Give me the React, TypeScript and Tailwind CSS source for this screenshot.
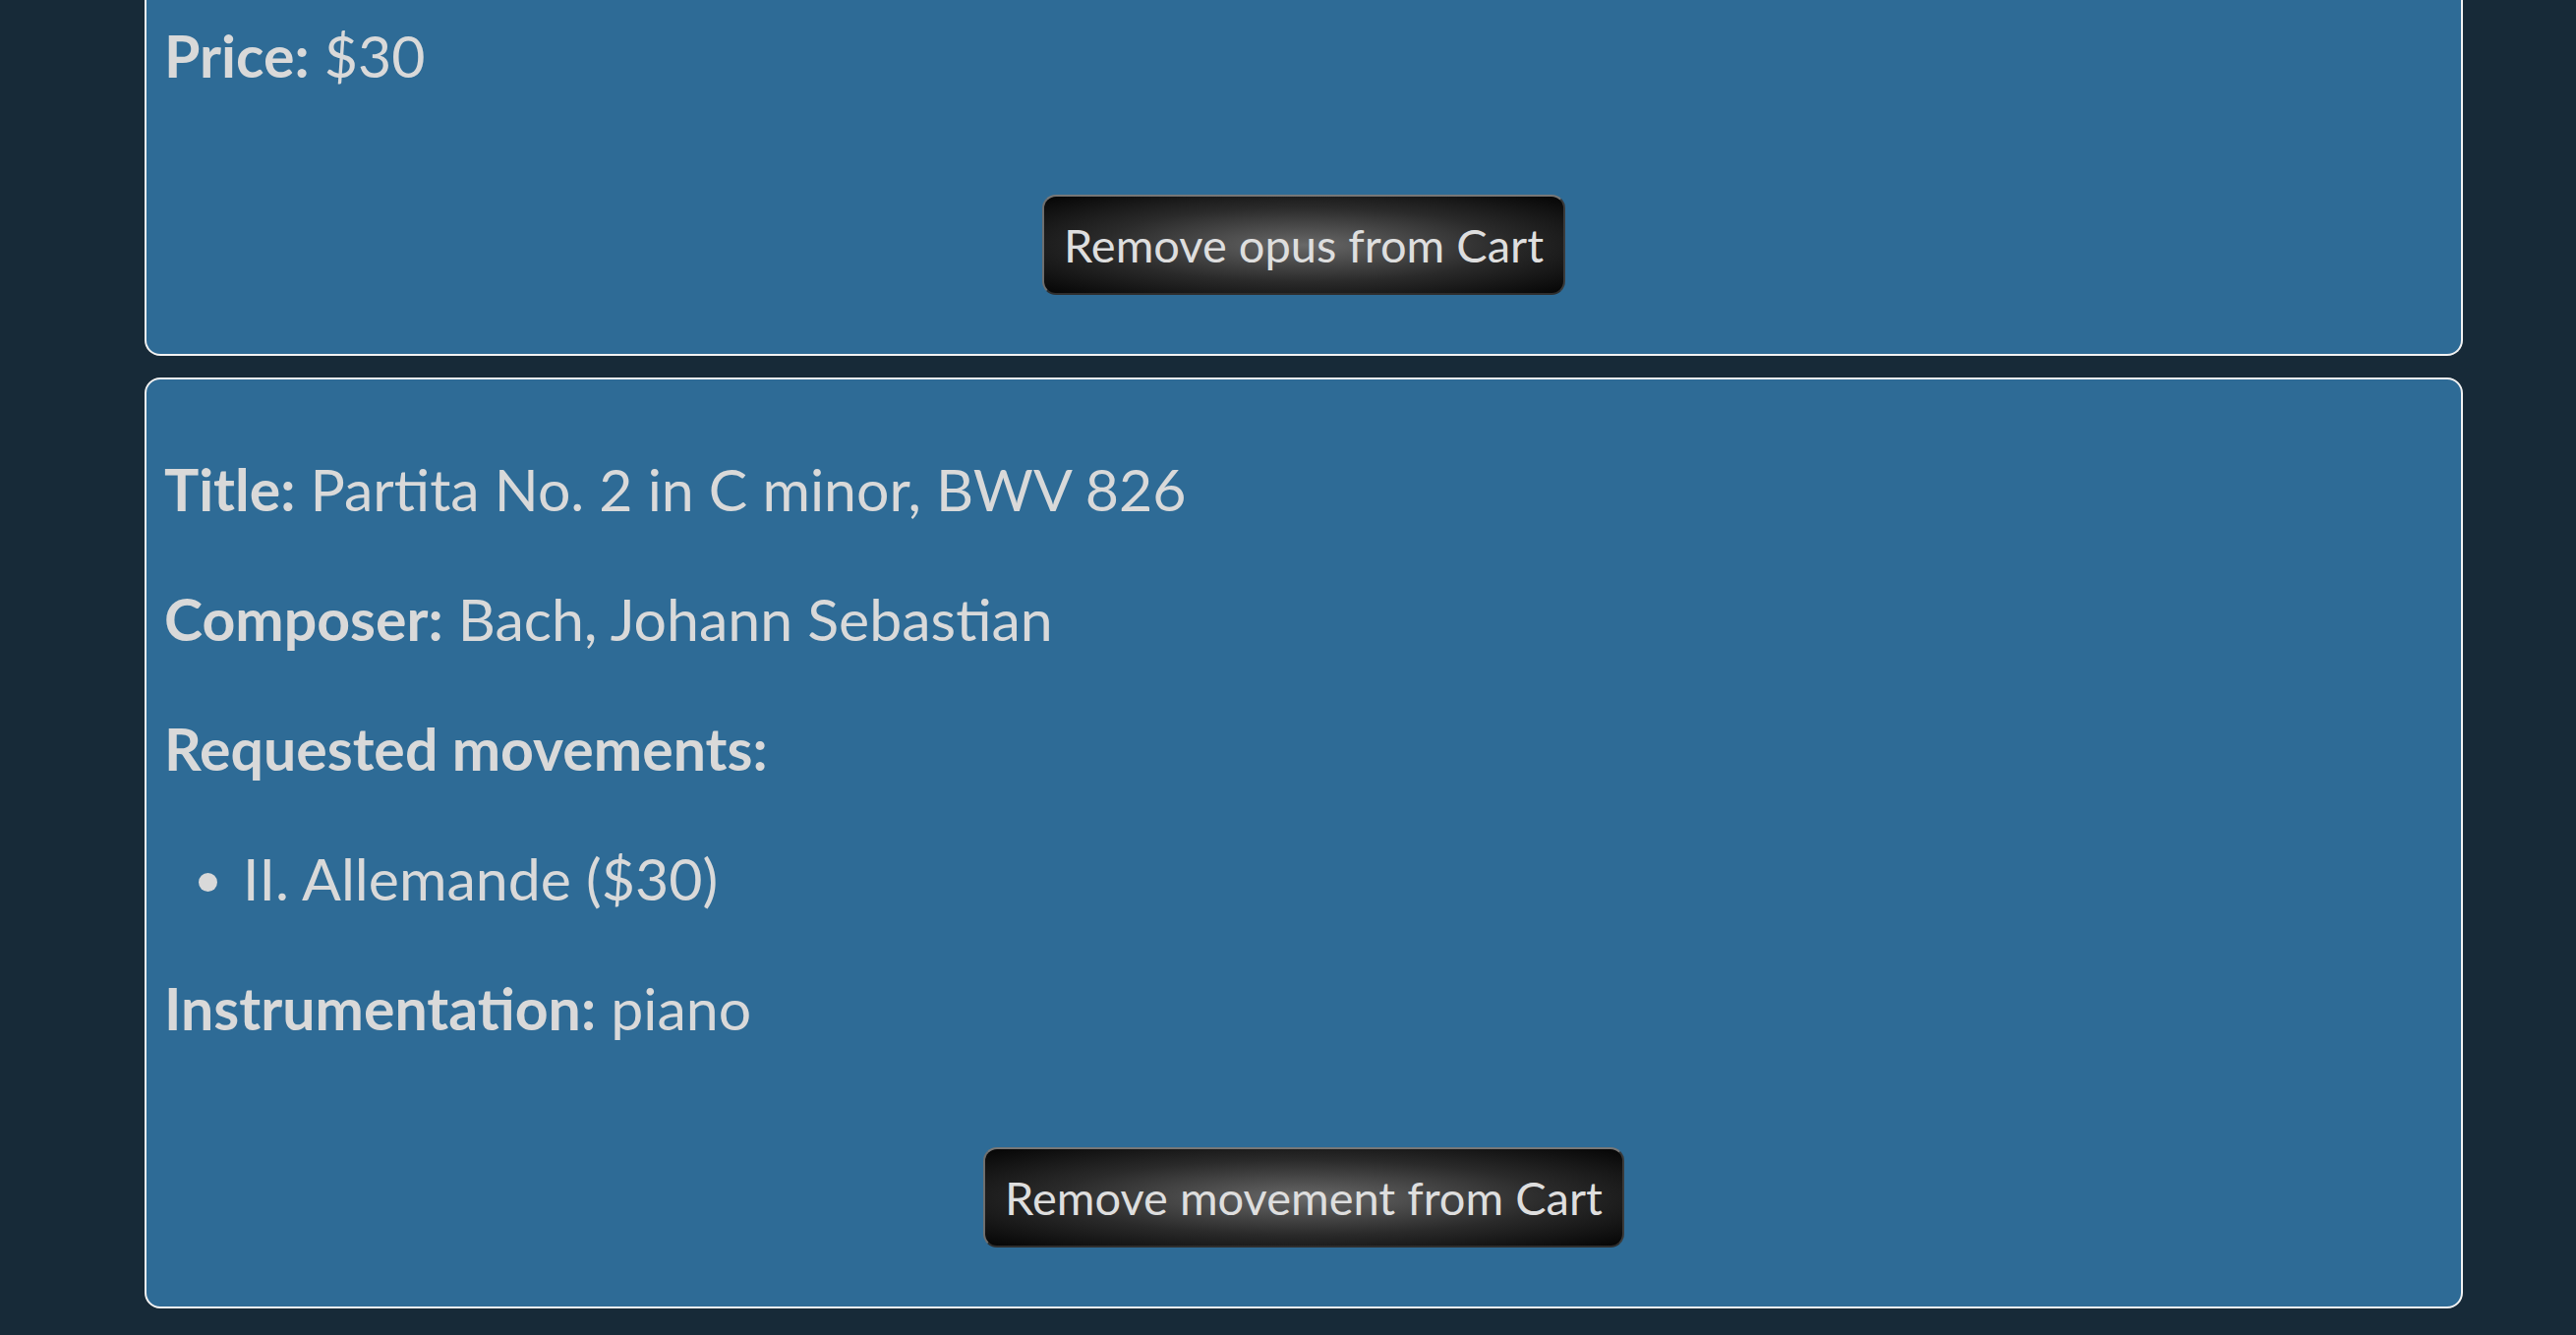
const font = "font-['Lato','Liberation_Sans',sans-serif]";

function CartButton({ label }: { label: string }) {
  return (
    <div className="flex justify-center mt-[104px]">
      <button
        type="button"
        className="h-[102px] px-[20px] rounded-[14px] border-2 border-t-[#777777] border-l-[#6e6e6e] border-r-[#3a3a3a] border-b-[#2e2e2e] bg-[radial-gradient(ellipse_at_center,#686868_0%,#2a2a2a_55%,#050505_100%)] text-[47px] leading-none text-[#dedede]"
      >
        {label}
      </button>
    </div>
  );
}

function Field({ label, value }: { label: string; value?: string }) {
  return (
    <p className="leading-[74px]">
      <b className="font-bold">{label}</b>
      {value ? ` ${value}` : null}
    </p>
  );
}

export default function App() {
  return (
    <div className={`min-h-screen h-[1358px] overflow-hidden bg-[#172a38] text-[#d9d9d9] text-[59px] ${font}`}>
      <div className="ml-[147px] w-[2358px] flex flex-col gap-[22px]">
        {/* first opus, scrolled partly out of view */}
        <div className="bg-[#2e6b96] border-2 border-t-0 border-[#f2f2f2] rounded-b-[16px] pt-[20px] pb-[60px] px-[18px]">
          <Field label="Price:" value="$30" />
          <CartButton label="Remove opus from Cart" />
        </div>

        <div className="bg-[#2e6b96] border-2 border-[#f2f2f2] rounded-[16px] pt-[75px] pb-[60px] px-[18px]">
          <div className="flex flex-col gap-[58px]">
            <Field label="Title:" value="Partita No. 2 in C minor, BWV 826" />
            <Field label="Composer:" value="Bach, Johann Sebastian" />
            <Field label="Requested movements:" />
            <ul className="list-disc pl-[80px] leading-[74px]">
              <li>II. Allemande ($30)</li>
            </ul>
            <Field label="Instrumentation:" value="piano" />
          </div>
          <CartButton label="Remove movement from Cart" />
        </div>
      </div>
    </div>
  );
}
